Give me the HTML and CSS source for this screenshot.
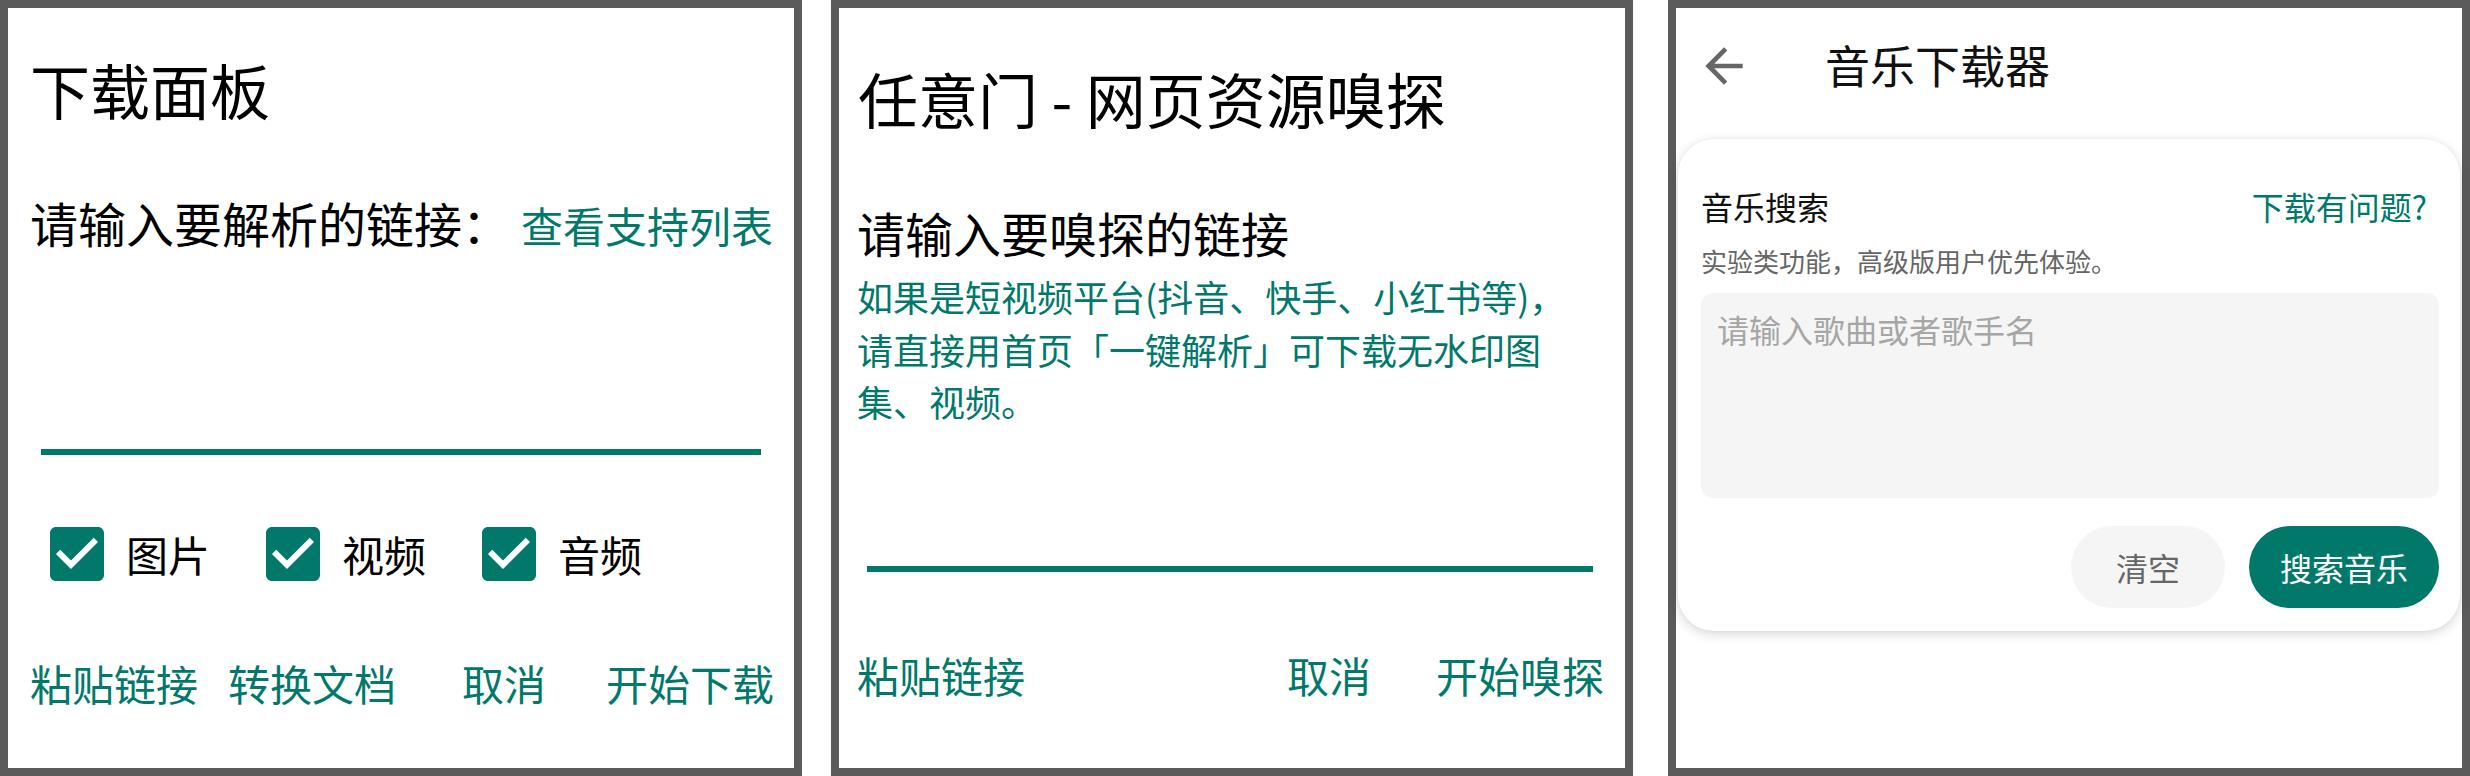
FILE: index.html
```html
<!DOCTYPE html>
<html lang="zh-CN">
<head>
<meta charset="utf-8">
<title>下载面板</title>
<link rel="stylesheet" href="styles.css">
</head>
<body>
<div class="screens">
  <section class="panel panel-download">
    <h1 class="dlg-title t1">下载面板</h1>
    <div class="label-row">
      <span class="label">请输入要解析的链接：</span>
      <span class="link">查看支持列表</span>
    </div>
    <div class="underline u1"></div>
    <div class="checks">
      <label class="check">
        <svg class="cb" viewBox="3 3 18 18" width="54" height="54"><path d="M19 3H5c-1.11 0-2 .9-2 2v14c0 1.1.89 2 2 2h14c1.11 0 2-.9 2-2V5c0-1.1-.89-2-2-2zm-9 14l-5-5 1.41-1.41L10 14.17l7.590-7.59L19 8l-9 9z"/></svg>
        <span>图片</span>
      </label>
      <label class="check">
        <svg class="cb" viewBox="3 3 18 18" width="54" height="54"><path d="M19 3H5c-1.11 0-2 .9-2 2v14c0 1.1.89 2 2 2h14c1.11 0 2-.9 2-2V5c0-1.1-.89-2-2-2zm-9 14l-5-5 1.41-1.41L10 14.17l7.59-7.59L19 8l-9 9z"/></svg>
        <span>视频</span>
      </label>
      <label class="check">
        <svg class="cb" viewBox="3 3 18 18" width="54" height="54"><path d="M19 3H5c-1.11 0-2 .9-2 2v14c0 1.1.89 2 2 2h14c1.11 0 2-.9 2-2V5c0-1.1-.89-2-2-2zm-9 14l-5-5 1.41-1.41L10 14.17l7.59-7.59L19 8l-9 9z"/></svg>
        <span>音频</span>
      </label>
    </div>
    <div class="actions a1">
      <span class="btn">粘贴链接</span>
      <span class="btn gap-30">转换文档</span>
      <span class="btn push">取消</span>
      <span class="btn gap-60">开始下载</span>
    </div>
  </section>

  <section class="panel panel-sniff">
    <h1 class="dlg-title t2">任意门 - 网页资源嗅探</h1>
    <div class="label l2">请输入要嗅探的链接</div>
    <p class="hint">如果是短视频平台(抖音、快手、小红书等)，<br>请直接用首页「一键解析」可下载无水印图<br>集、视频。</p>
    <div class="underline u2"></div>
    <div class="actions a2">
      <span class="btn">粘贴链接</span>
      <span class="btn push">取消</span>
      <span class="btn gap-65">开始嗅探</span>
    </div>
  </section>

  <section class="panel panel-music">
    <header class="toolbar">
      <svg class="back" viewBox="0 0 24 24" width="56" height="56"><path d="M20 11H7.83l5.59-5.59L12 4l-8 8 8 8 1.41-1.41L7.83 13H20v-2z"/></svg>
      <span class="tb-title">音乐下载器</span>
    </header>
    <div class="card">
      <div class="card-head">
        <span class="card-title">音乐搜索</span>
        <span class="card-link">下载有问题?</span>
      </div>
      <div class="card-sub">实验类功能，高级版用户优先体验。</div>
      <div class="input"><span class="placeholder">请输入歌曲或者歌手名</span></div>
      <div class="card-actions">
        <span class="pill pill-clear">清空</span>
        <span class="pill pill-search">搜索音乐</span>
      </div>
    </div>
  </section>
</div>
</body>
</html>
```

FILE: styles.css
```css
* { box-sizing: border-box; }

html, body {
  margin: 0;
  padding: 0;
  background: #ffffff;
}

body {
  font-family: "Noto Sans CJK SC", "Noto Sans", sans-serif;
  color: #000;
}

.screens {
  display: flex;
  width: 2470px;
  height: 776px;
}

.panel {
  width: 802px;
  height: 776px;
  border: 8px solid #5b5b5b;
  background: #fff;
  display: flex;
  flex-direction: column;
  flex-shrink: 0;
}

.panel-sniff { margin-left: 29px; }
.panel-music { margin-left: 35px; }

/* ---------- dialogs ---------- */
.dlg-title {
  margin: 0;
  font-weight: 400;
  font-size: 60px;
  line-height: 80px;
  white-space: nowrap;
  color: #000;
}

.t1 { margin: 41px 0 0 22px; }
.t2 { margin: 50px 0 0 19px; }

.label-row {
  display: flex;
  align-items: baseline;
  margin: 61px 0 0 22px;
  height: 64px;
}

.label {
  font-size: 48px;
  line-height: 64px;
  color: #000;
  white-space: nowrap;
}

.link {
  font-size: 42px;
  line-height: 64px;
  color: #00796b;
  margin-left: 11px;
  white-space: nowrap;
}

.l2 { margin: 62px 0 0 18px; }

.hint {
  margin: 6px 0 0 18px;
  font-size: 36px;
  line-height: 52.5px;
  color: #00796b;
  white-space: nowrap;
}

.underline {
  height: 6px;
  background: #00796b;
}

.u1 { margin: 195px 33px 0 33px; }
.u2 { margin: 138px 32px 0 28px; }

.checks {
  display: flex;
  margin: 72px 0 0 42px;
  gap: 56px;
  height: 54px;
}

.check {
  display: flex;
  align-items: center;
  font-size: 42px;
  line-height: 54px;
  color: #000;
}

.cb {
  display: block;
  fill: #00796b;
  margin-right: 22px;
}

.actions {
  display: flex;
  align-items: center;
  font-size: 42px;
  line-height: 56px;
  color: #00796b;
}

.a1 { margin: 74px 20px 0 22px; }
.a2 { margin: 75px 21px 0 18px; }

.btn { white-space: nowrap; }
.push { margin-left: auto; }
.gap-30 { margin-left: 30px; }
.gap-60 { margin-left: 60px; }
.gap-65 { margin-left: 65px; }

/* ---------- music page ---------- */
.toolbar {
  display: flex;
  align-items: center;
  height: 116px;
  padding-left: 20px;
}

.back {
  display: block;
  fill: #666;
  flex-shrink: 0;
}

.tb-title {
  margin-left: 73px;
  font-size: 45px;
  line-height: 60px;
  color: #111;
  position: relative;
  top: -1px;
}

.card {
  margin: 15px 2px 0 2px;
  height: 492px;
  border-radius: 36px;
  background: #fff;
  box-shadow: 0 3px 12px rgba(0, 0, 0, 0.16), 0 0 3px rgba(0, 0, 0, 0.05);
  padding: 45px 21px 23px 23px;
  display: flex;
  flex-direction: column;
}

.card-head {
  display: flex;
  justify-content: space-between;
  align-items: baseline;
  height: 44px;
}

.card-title {
  font-size: 32px;
  line-height: 44px;
  color: #111;
}

.card-link {
  font-size: 32px;
  line-height: 44px;
  color: #00796b;
  margin-right: 12px;
}

.card-sub {
  margin-top: 15px;
  font-size: 26px;
  line-height: 36px;
  color: #666;
  white-space: nowrap;
}

.input {
  margin-top: 14px;
  height: 205px;
  background: #f5f5f5;
  border-radius: 12px;
  padding: 14px 16px;
}

.placeholder {
  font-size: 32px;
  line-height: 44px;
  color: #a6a6a6;
}

.card-actions {
  margin-top: 28px;
  display: flex;
  justify-content: flex-end;
  gap: 24px;
}

.pill {
  height: 82px;
  border-radius: 41px;
  display: flex;
  align-items: center;
  justify-content: center;
  font-size: 32px;
  white-space: nowrap;
}

.pill-clear {
  width: 154px;
  background: #f5f5f5;
  color: #666;
}

.pill-search {
  width: 190px;
  background: #00796b;
  color: #fff;
}
```
